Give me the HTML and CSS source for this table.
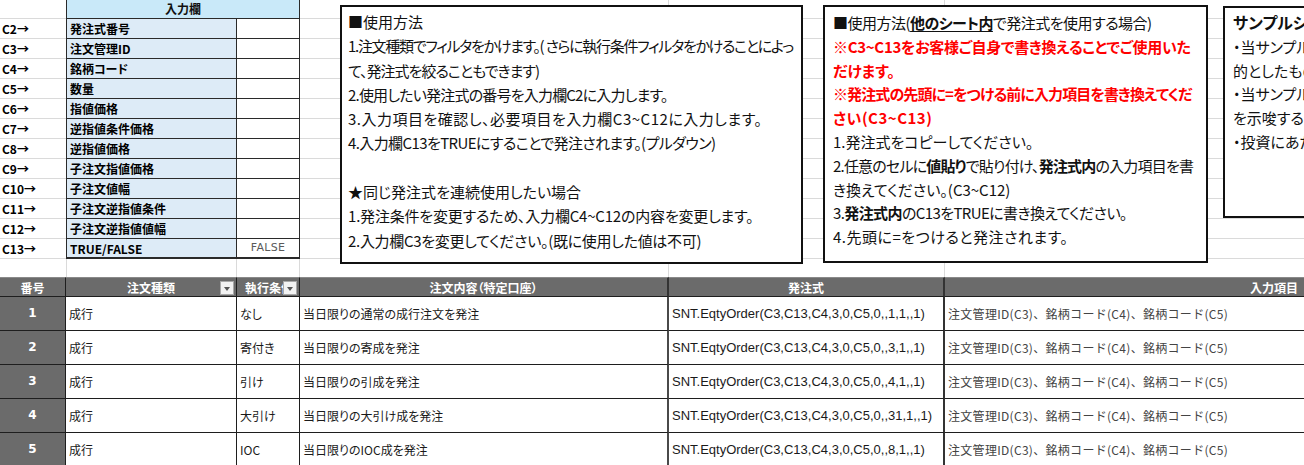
FILE: index.html
```html
<!DOCTYPE html>
<html lang="ja">
<head>
<meta charset="utf-8">
<title>発注式サンプル</title>
<link rel="stylesheet" href="styles.css">
</head>
<body>
<div class="sheet">
  <div class="top">
    <div class="col-a grid-bg">
      <div class="ref">C2→</div>
      <div class="ref">C3→</div>
      <div class="ref">C4→</div>
      <div class="ref">C5→</div>
      <div class="ref">C6→</div>
      <div class="ref">C7→</div>
      <div class="ref">C8→</div>
      <div class="ref">C9→</div>
      <div class="ref">C10→</div>
      <div class="ref">C11→</div>
      <div class="ref">C12→</div>
      <div class="ref">C13→</div>
    </div>
    <div class="input">
      <div class="in-head">入力欄</div>
      <div class="in-row"><div class="in-label">発注式番号</div><div class="in-val"></div></div>
      <div class="in-row"><div class="in-label">注文管理ID</div><div class="in-val"></div></div>
      <div class="in-row"><div class="in-label">銘柄コード</div><div class="in-val"></div></div>
      <div class="in-row"><div class="in-label">数量</div><div class="in-val"></div></div>
      <div class="in-row"><div class="in-label">指値価格</div><div class="in-val"></div></div>
      <div class="in-row"><div class="in-label">逆指値条件価格</div><div class="in-val"></div></div>
      <div class="in-row"><div class="in-label">逆指値価格</div><div class="in-val"></div></div>
      <div class="in-row"><div class="in-label">子注文指値価格</div><div class="in-val"></div></div>
      <div class="in-row"><div class="in-label">子注文値幅</div><div class="in-val"></div></div>
      <div class="in-row"><div class="in-label">子注文逆指値条件</div><div class="in-val"></div></div>
      <div class="in-row"><div class="in-label">子注文逆指値値幅</div><div class="in-val"></div></div>
      <div class="in-row last"><div class="in-label">TRUE/FALSE</div><div class="in-val false">FALSE</div></div>
      <div class="in-tail"><div class="tail-b"></div><div class="tail-c"></div></div>
    </div>
    <div class="col-d grid-bg"></div>
    <div class="col-e grid-bg"></div>
    <div class="col-f grid-bg"></div>
  </div>

  <div class="table">
    <div class="th">番号</div>
    <div class="th filter">注文種類<span class="fbtn"></span></div>
    <div class="th filter left">執行条件<span class="fbtn"></span></div>
    <div class="th th-d">注文内容（特定口座）</div>
    <div class="th th-e">発注式</div>
    <div class="th th-f">入力項目</div>

    <div class="num">1</div><div class="td">成行</div><div class="td">なし</div><div class="td td-d">当日限りの通常の成行注文を発注</div><div class="td td-e">SNT.EqtyOrder(C3,C13,C4,3,0,C5,0,,1,1,,1)</div><div class="td td-f">注文管理ID(C3)、銘柄コード(C4)、銘柄コード(C5)</div>
    <div class="num">2</div><div class="td">成行</div><div class="td">寄付き</div><div class="td td-d">当日限りの寄成を発注</div><div class="td td-e">SNT.EqtyOrder(C3,C13,C4,3,0,C5,0,,3,1,,1)</div><div class="td td-f">注文管理ID(C3)、銘柄コード(C4)、銘柄コード(C5)</div>
    <div class="num">3</div><div class="td">成行</div><div class="td">引け</div><div class="td td-d">当日限りの引成を発注</div><div class="td td-e">SNT.EqtyOrder(C3,C13,C4,3,0,C5,0,,4,1,,1)</div><div class="td td-f">注文管理ID(C3)、銘柄コード(C4)、銘柄コード(C5)</div>
    <div class="num">4</div><div class="td">成行</div><div class="td">大引け</div><div class="td td-d">当日限りの大引け成を発注</div><div class="td td-e">SNT.EqtyOrder(C3,C13,C4,3,0,C5,0,,31,1,,1)</div><div class="td td-f">注文管理ID(C3)、銘柄コード(C4)、銘柄コード(C5)</div>
    <div class="num">5</div><div class="td">成行</div><div class="td">IOC</div><div class="td td-d">当日限りのIOC成を発注</div><div class="td td-e">SNT.EqtyOrder(C3,C13,C4,3,0,C5,0,,8,1,,1)</div><div class="td td-f">注文管理ID(C3)、銘柄コード(C4)、銘柄コード(C5)</div>
  </div>

  <div class="note note-1">
    <div class="ln">■使用方法</div>
    <div class="ln ls-n13">1.注文種類でフィルタをかけます。( さらに執行条件フィルタをかけることによっ</div>
    <div class="ln ls-n10">て、発注式を絞ることもできます)</div>
    <div class="ln ls-n8">2.使用したい発注式の番号を入力欄C2に入力します。</div>
    <div class="ln ls-p5">3.入力項目を確認し、必要項目を入力欄C3~C12に入力します。</div>
    <div class="ln ls-n6">4.入力欄C13をTRUEにすることで発注されます。(プルダウン)</div>
    <div class="ln">&nbsp;</div>
    <div class="ln">★同じ発注式を連続使用したい場合</div>
    <div class="ln ls-n2">1.発注条件を変更するため、入力欄C4~C12の内容を変更します。</div>
    <div class="ln ls-n3">2.入力欄C3を変更してください。(既に使用した値は不可)</div>
  </div>

  <div class="note note-2">
    <div class="ln ls-n5">■使用方法(<b class="ul">他のシート内</b>で発注式を使用する場合)</div>
    <div class="ln red ls-n3">※C3~C13をお客様ご自身で書き換えることでご使用いた</div>
    <div class="ln red">だけます。</div>
    <div class="ln red ls-n9">※発注式の先頭に=をつける前に入力項目を書き換えてくだ</div>
    <div class="ln red ls-p5">さい(C3~C13)</div>
    <div class="ln">1.発注式をコピーしてください。</div>
    <div class="ln ls-n8">2.任意のセルに<b>値貼り</b>で貼り付け、<b>発注式内</b>の入力項目を書</div>
    <div class="ln">き換えてください。(C3~C12)</div>
    <div class="ln ls-n6">3.<b>発注式内</b>のC13をTRUEに書き換えてください。</div>
    <div class="ln ls-p5">4.先頭に=をつけると発注されます。</div>
  </div>

  <div class="note note-3">
    <div class="ln title">サンプルシートについて</div>
    <div class="ln">・当サンプルシートは情報提供を目</div>
    <div class="ln">的としたものです。</div>
    <div class="ln">・当サンプルシートは特定の銘柄</div>
    <div class="ln">を示唆するものではありません。</div>
    <div class="ln">・投資にあたっての最終決定は</div>
  </div>
</div>
</body>
</html>
```

FILE: styles.css
```css
* { box-sizing: border-box; }

html, body {
  margin: 0;
  padding: 0;
  background: #ffffff;
  overflow: hidden;
}

body {
  width: 1304px;
  height: 465px;
  font-family: "Noto Sans CJK JP", "Noto Sans", sans-serif;
  color: #111;
}

.sheet {
  position: relative;
  width: 1304px;
  height: 465px;
  overflow: hidden;
}

/* ---------- top area ---------- */
.top {
  display: flex;
  height: 277px;
}

.grid-bg {
  background-image: repeating-linear-gradient(to bottom, transparent 0, transparent 19px, #dadada 19px, #dadada 20px);
  background-position: 0 -1px;
}

.col-a {
  width: 66px;
  padding-top: 19px;
  display: flex;
  flex-direction: column;
}

.ref {
  height: 20px;
  line-height: 19px;
  padding-left: 2px;
  font-family: "Noto Sans CJK JP", "Noto Sans", sans-serif;
  font-weight: bold;
  font-size: 12px;
  color: #000;
}

.input {
  width: 234px;
  display: flex;
  flex-direction: column;
}

.in-head {
  height: 19px;
  background: #c9e9f9;
  border: 1px solid #2a2a2a;
  border-top: none;
  text-align: center;
  font-weight: bold;
  font-size: 12px;
  line-height: 18px;
  font-feature-settings: "palt";
}

.in-row {
  display: flex;
  height: 20px;
}

.in-label {
  width: 171px;
  background: #ddebf7;
  border-left: 1px solid #2a2a2a;
  border-right: 1px solid #2a2a2a;
  border-bottom: 1px solid #2a2a2a;
  padding-left: 3px;
  font-weight: bold;
  font-size: 12px;
  line-height: 19px;
  font-feature-settings: "palt";
  color: #000;
}

.in-val {
  width: 63px;
  background: #fff;
  border-right: 1px solid #2a2a2a;
  border-bottom: 1px solid #2a2a2a;
}

.in-row.last .in-label,
.in-row.last .in-val {
  border-bottom-width: 2px;
}

.in-val.false {
  text-align: center;
  font-family: "DejaVu Sans", "Noto Sans", sans-serif;
  font-size: 11px;
  line-height: 18px;
  color: #5a5a5a;
  letter-spacing: 0.3px;
}

.in-tail {
  display: flex;
  height: 18px;
}

.tail-b {
  width: 171px;
  border-left: 1px solid #dadada;
  border-right: 1px solid #dadada;
}

.tail-c {
  width: 63px;
  border-right: 1px solid #dadada;
}

.col-d {
  width: 369px;
  border-right: 1px solid #dadada;
}

.col-e {
  width: 276px;
  border-right: 1px solid #dadada;
}

.col-f {
  flex: 1;
}

/* ---------- data table ---------- */
.table {
  display: grid;
  grid-template-columns: 66px 171px 63px 369px 276px 1fr;
  grid-template-rows: 20px;
  grid-auto-rows: 34px;
}

.th {
  position: relative;
  background: #6b6b6b;
  color: #fff;
  font-weight: bold;
  font-size: 12px;
  line-height: 19px;
  text-align: center;
  border-top: 1px solid #8a8a8a;
  border-right: 1px solid #1e1e1e;
  border-bottom: 1px solid #1e1e1e;
  white-space: nowrap;
  overflow: hidden;
  font-feature-settings: "palt";
}

.th.left {
  text-align: left;
  padding-left: 8px;
}

.th-d, .th-e {
  border-right: 2px solid #333;
}

.th-f {
  text-align: right;
  padding-right: 6px;
  border-right: none;
}

.fbtn {
  position: absolute;
  right: 2px;
  top: 3px;
  width: 14px;
  height: 14px;
  background: #f2f2f2;
  border: 1px solid #a8a8a8;
}

.fbtn::after {
  content: "";
  position: absolute;
  left: 3px;
  top: 5px;
  border-left: 3.5px solid transparent;
  border-right: 3.5px solid transparent;
  border-top: 4px solid #555;
}

.num {
  background: #6b6b6b;
  color: #fff;
  font-family: "DejaVu Sans", "Noto Sans", sans-serif;
  font-weight: bold;
  font-size: 12px;
  text-align: center;
  line-height: 33px;
  border-right: 1px solid #1e1e1e;
  border-bottom: 1px solid #1e1e1e;
}

.td {
  background: #fff;
  font-size: 12px;
  line-height: 33px;
  padding-left: 3px;
  color: #1a1a1a;
  border-right: 1px solid #1e1e1e;
  border-bottom: 1px solid #1e1e1e;
  white-space: nowrap;
  overflow: hidden;
  font-feature-settings: "palt";
}

.td-d {
  border-right: 2px solid #4a4a4a;
}

.td-e {
  font-family: "Liberation Sans", "Noto Sans", sans-serif;
  font-size: 13px;
  border-right: 2px solid #333;
}

.td-f {
  border-right: none;
  color: #444;
  font-feature-settings: normal;
  letter-spacing: 0.3px;
}

/* ---------- floating text boxes ---------- */
.note {
  position: absolute;
  background: #fff;
  border: 2px solid #111;
  padding: 3px 0 0 6px;
  font-size: 15px;
  line-height: 23.8px;
  color: #111;
  white-space: nowrap;
  overflow: hidden;
  font-feature-settings: "palt";
}

.note-1 {
  left: 340px;
  top: 5px;
  width: 463px;
  height: 259px;
  line-height: 24.3px;
  padding-top: 3px;
}

.note-2 {
  left: 823px;
  top: 5px;
  width: 385px;
  height: 258px;
  padding-left: 8px;
  padding-top: 4px;
}

.note-3 {
  left: 1223px;
  top: 6px;
  width: 300px;
  height: 212px;
  padding-left: 8px;
}

.note b {
  font-weight: bold;
}

.note .ul {
  text-decoration: underline;
  text-underline-offset: 2px;
}

.note .red {
  color: #ff0000;
  font-weight: bold;
}

.note .title {
  font-weight: bold;
  font-size: 16px;
}

/* per-line tracking to match the original font's narrower kana */
.ls-n13 { letter-spacing: -1.3px; }
.ls-n10 { letter-spacing: -1px; }
.ls-n9 { letter-spacing: -0.9px; }
.ls-n8 { letter-spacing: -0.8px; }
.ls-n6 { letter-spacing: -0.6px; }
.ls-n5 { letter-spacing: -0.5px; }
.ls-n3 { letter-spacing: -0.3px; }
.ls-n2 { letter-spacing: -0.2px; }
.ls-p5 { letter-spacing: 0.5px; }
```
